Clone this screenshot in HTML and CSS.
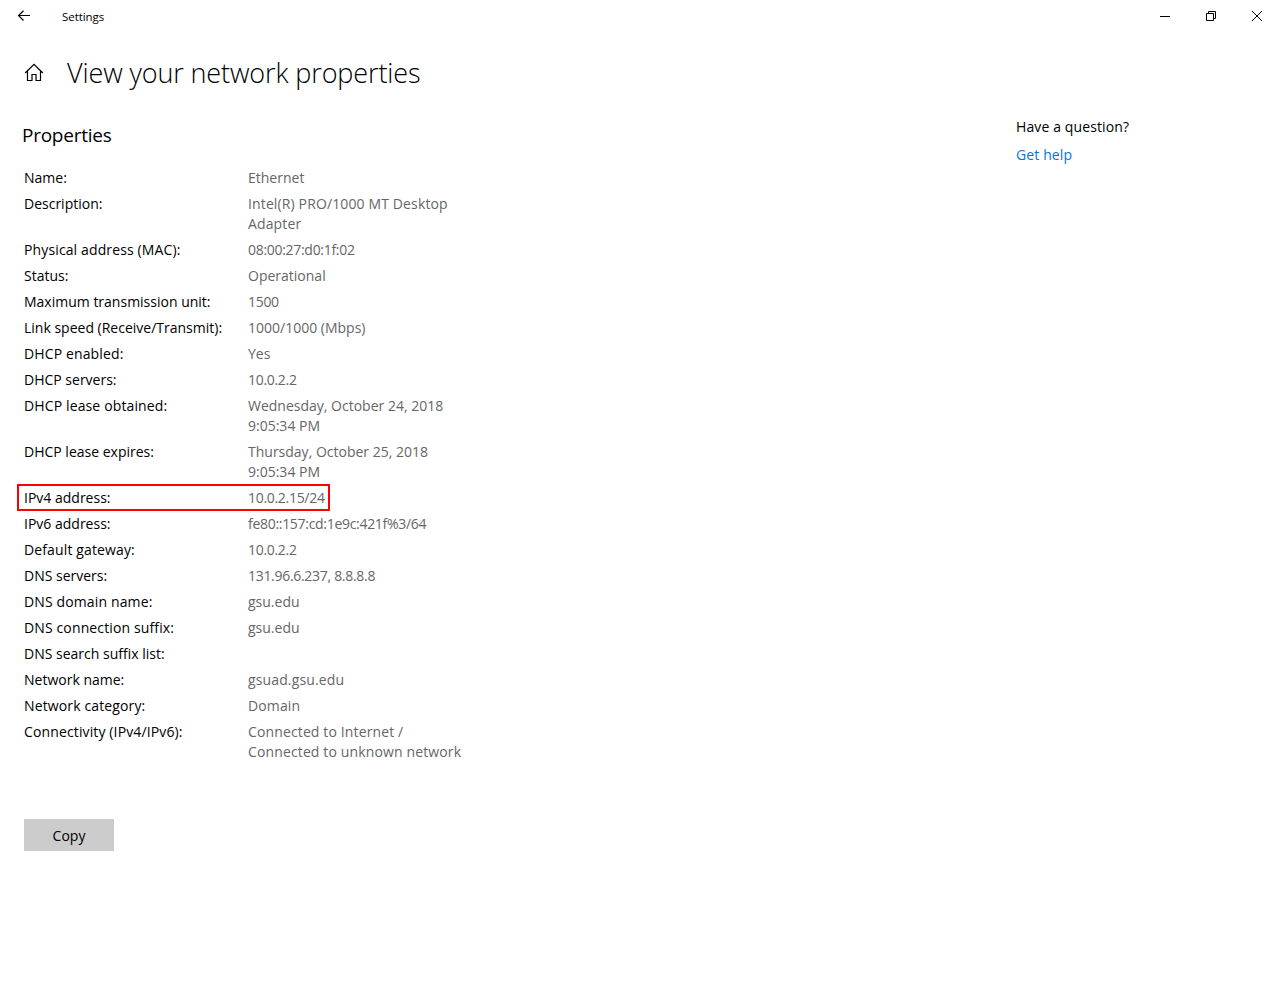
FILE: index.html
```html
<!DOCTYPE html>
<html lang="en">
<head>
    <meta charset="UTF-8">
    <meta name="viewport" content="width=device-width, initial-scale=1.0">
    <title>Settings</title>
    <link rel="stylesheet" href="styles.css">
</head>
<body>
    <header class="titlebar">
        <svg class="back" width="14" height="12" viewBox="0 0 14 12">
            <path d="M13 5.5H1.5M6.5 0.7L1.5 5.5L6.5 10.5"/>
        </svg>
        <span class="app-name">Settings</span>
        <div class="window-buttons">
            <svg width="12" height="12" viewBox="0 0 12 12"><path d="M1 6.5H11"/></svg>
            <svg width="12" height="12" viewBox="0 0 12 12"><path d="M1.5 3.5H8.5V10.5H1.5ZM3.5 3.5V1.5H10.5V8.5H8.5"/></svg>
            <svg width="12" height="12" viewBox="0 0 12 12"><path d="M1 1L11 11M11 1L1 11"/></svg>
        </div>
    </header>

    <div class="page-header">
        <svg class="home" width="20" height="20" viewBox="0 0 20 20">
            <path d="M1.2 10L10 1.4L18.8 10M3.5 8V17.5H8V11.5H12V17.5H16.5V8"/>
        </svg>
        <h1>View your network properties</h1>
    </div>

    <div class="content">
        <main>
            <h2>Properties</h2>
            <dl class="properties">
                <div class="row"><dt>Name:</dt><dd>Ethernet</dd></div>
                <div class="row"><dt>Description:</dt><dd class="wide">Intel(R) PRO/1000 MT Desktop<br>Adapter</dd></div>
                <div class="row"><dt class="wide">Physical address (MAC):</dt><dd class="digits">08:00:27:d0:1f:02</dd></div>
                <div class="row"><dt>Status:</dt><dd>Operational</dd></div>
                <div class="row"><dt>Maximum transmission unit:</dt><dd class="digits">1500</dd></div>
                <div class="row"><dt>Link speed (Receive/Transmit):</dt><dd>1000/1000 (Mbps)</dd></div>
                <div class="row"><dt class="wide">DHCP enabled:</dt><dd>Yes</dd></div>
                <div class="row"><dt>DHCP servers:</dt><dd class="digits">10.0.2.2</dd></div>
                <div class="row"><dt class="wide">DHCP lease obtained:</dt><dd>Wednesday, October 24, 2018<br>9:05:34 PM</dd></div>
                <div class="row"><dt>DHCP lease expires:</dt><dd>Thursday, October 25, 2018<br>9:05:34 PM</dd></div>
                <div class="row marked"><dt>IPv4 address:</dt><dd class="digits">10.0.2.15/24</dd></div>
                <div class="row"><dt>IPv6 address:</dt><dd class="digits">fe80::157:cd:1e9c:421f%3/64</dd></div>
                <div class="row"><dt class="wide">Default gateway:</dt><dd class="digits">10.0.2.2</dd></div>
                <div class="row"><dt>DNS servers:</dt><dd class="digits">131.96.6.237, 8.8.8.8</dd></div>
                <div class="row"><dt class="wide">DNS domain name:</dt><dd>gsu.edu</dd></div>
                <div class="row"><dt class="wide">DNS connection suffix:</dt><dd>gsu.edu</dd></div>
                <div class="row"><dt>DNS search suffix list:</dt><dd></dd></div>
                <div class="row"><dt>Network name:</dt><dd class="wide">gsuad.gsu.edu</dd></div>
                <div class="row"><dt class="wide">Network category:</dt><dd class="wide">Domain</dd></div>
                <div class="row"><dt class="wide">Connectivity (IPv4/IPv6):</dt><dd class="wide">Connected to Internet /<br>Connected to unknown network</dd></div>
            </dl>
            <button class="copy">Copy</button>
        </main>
        <aside class="help">
            <p>Have a question?</p>
            <a href="#">Get help</a>
        </aside>
    </div>
</body>
</html>
```
FILE: styles.css
```css
* {
    box-sizing: border-box;
}
body {
    margin: 0;
    background-color: #fff;
    color: #000;
    font-family: "Segoe UI", "Open Sans", "Noto Sans", sans-serif;
    font-size: 14px;
    line-height: 20px;
}
svg {
    display: block;
    fill: none;
    stroke: #000;
    stroke-width: 1;
}
.titlebar {
    display: flex;
    align-items: center;
    height: 32px;
    padding: 0 17px;
}
.back {
    stroke-width: 1.2;
}
.app-name {
    margin-left: 31px;
    padding-top: 1px;
    font-size: 11.5px;
    letter-spacing: -0.05px;
}
.window-buttons {
    display: flex;
    gap: 34px;
    margin-left: auto;
}
.page-header {
    display: flex;
    align-items: center;
    height: 80px;
    padding: 1px 0 0 24px;
}
.home {
    stroke-width: 1.2;
}
h1 {
    margin: 0 0 0 23px;
    font-size: 27px;
    font-weight: 300;
    line-height: 36px;
    letter-spacing: -0.12px;
}
h2 {
    margin: 0 0 20px -2px;
    font-size: 19px;
    font-weight: 400;
    line-height: 26px;
    letter-spacing: -0.25px;
}
.content {
    display: flex;
    padding: 10px 24px 0;
}
main {
    width: 992px;
}
.properties {
    display: flex;
    flex-direction: column;
    gap: 6px;
    margin: 0;
}
.row {
    display: flex;
}
dt {
    width: 224px;
}
dd {
    margin: 0;
    min-height: 20px;
    color: #666;
}
.wide {
    letter-spacing: 0.13px;
}
.digits {
    letter-spacing: -0.3px;
}
/* red frame sits in the gaps between rows */
.marked {
    width: 313px;
    margin: -4px 0 -3px -7px;
    padding: 2px 0 1px 5px;
    border: 2px solid #f00;
}
.copy {
    display: block;
    width: 90px;
    height: 32px;
    margin-top: 57px;
    padding: 1px 0 0;
    border: none;
    background-color: #ccc;
    color: #000;
    font: inherit;
}
.help {
    letter-spacing: 0.12px;
}
.help p {
    margin: -5px 0 8px;
}
.help a {
    color: #0078d7;
    text-decoration: none;
}
```
